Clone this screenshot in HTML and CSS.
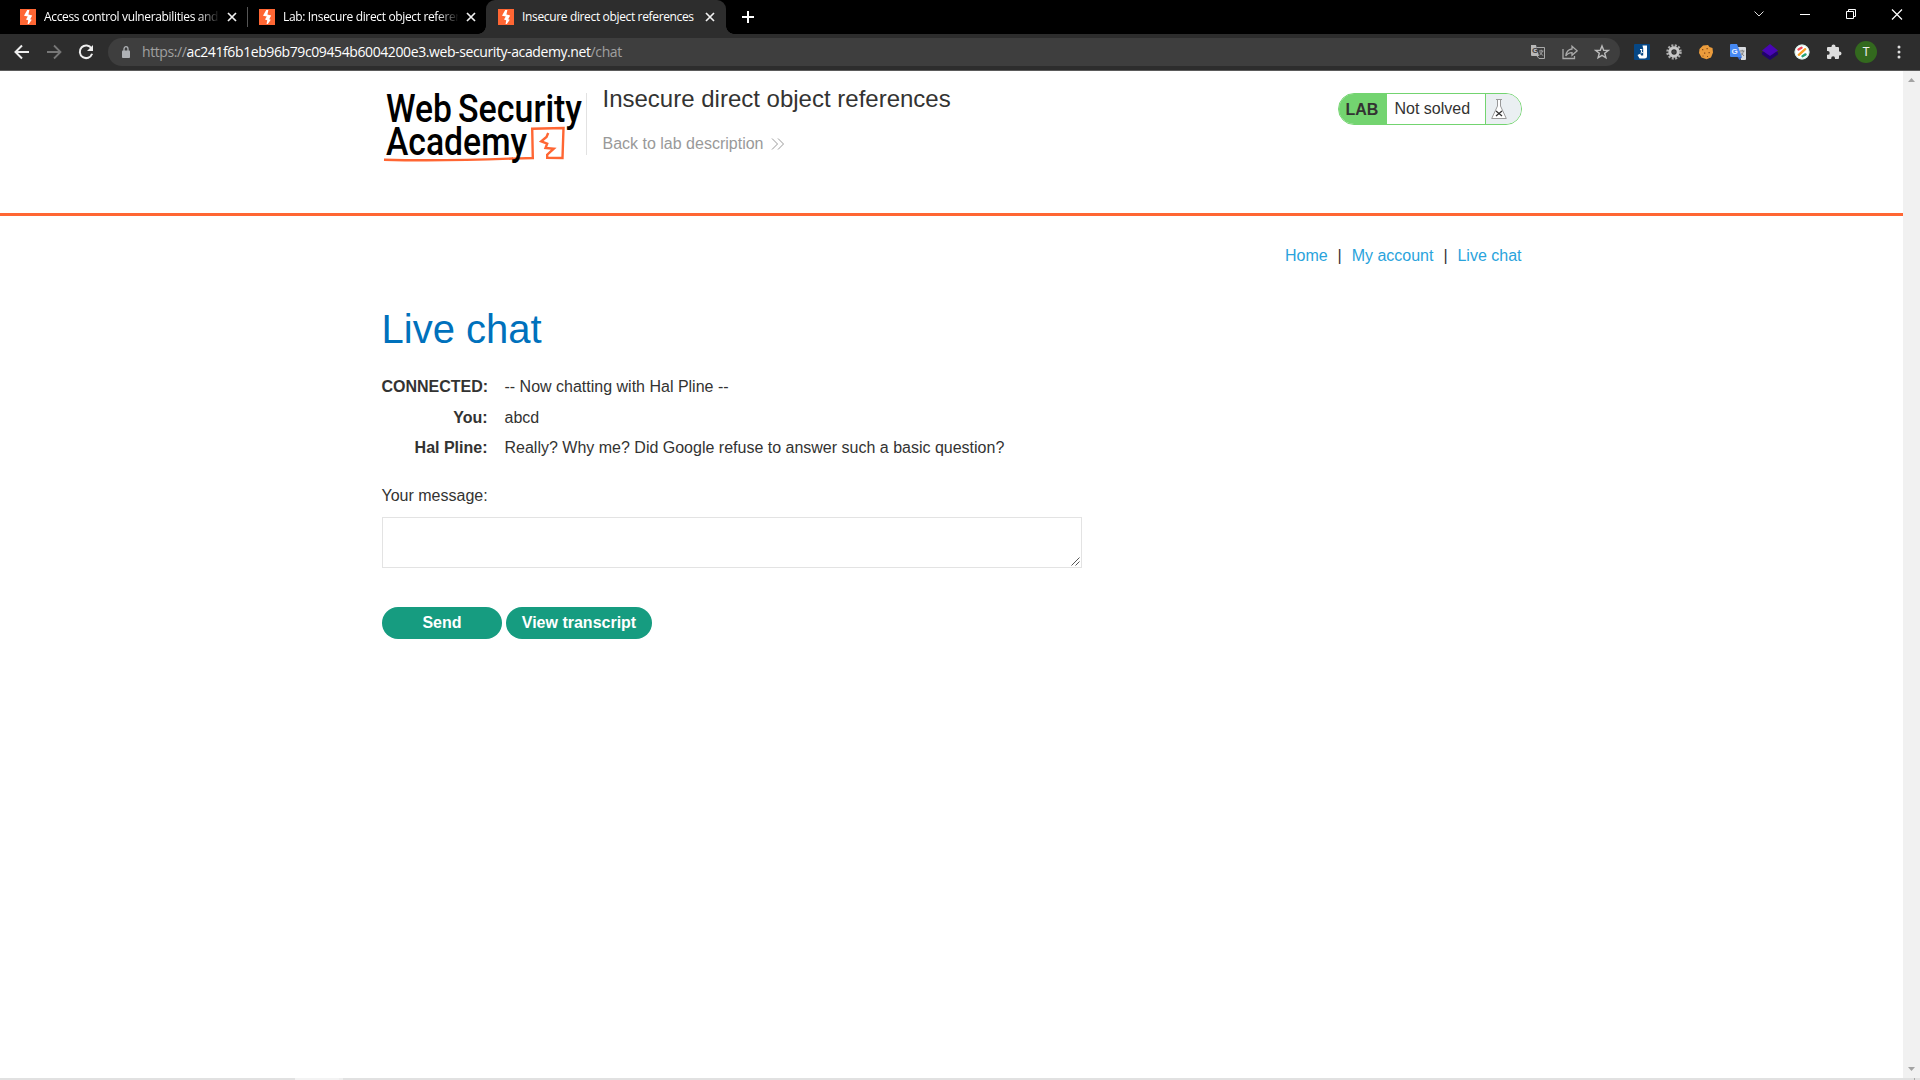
FILE: index.html
```html
<!DOCTYPE html>
<html lang="en">
<head>
<meta charset="utf-8">
<title>Insecure direct object references</title>
<link rel="stylesheet" href="styles.css">
</head>
<body>
<svg class="defs" width="0" height="0">
  <symbol id="bolt" viewBox="0 0 16 16"><rect width="16" height="16" fill="#ff6633"/><path d="M7.200 1h2.200L8.400 5.600l3.800.8-2 3.800 1.600.6L8.800 15H7.600l.6-3.800-2.200-.6L7.800 7.600 4 6.800z" fill="#fff"/></symbol>
  <symbol id="cross" viewBox="0 0 10 10"><path d="M1 1l8 8M9 1L1 9" stroke="#f1f1f1" stroke-width="1.700" fill="none"/></symbol>
</svg>
<div class="browser">
  <header class="tabstrip">
    <div class="tab"><svg class="fav"><use href="#bolt"/></svg><span class="tab-title faded">Access control vulnerabilities and</span><svg class="close"><use href="#cross"/></svg></div>
    <div class="tab divided"><svg class="fav"><use href="#bolt"/></svg><span class="tab-title faded">Lab: Insecure direct object referen</span><svg class="close"><use href="#cross"/></svg></div>
    <div class="tab active"><svg class="fav"><use href="#bolt"/></svg><span class="tab-title">Insecure direct object references</span><svg class="close"><use href="#cross"/></svg></div>
    <svg class="plus" width="12" height="12" viewBox="0 0 12 12"><path d="M6 0v12M0 6h12" stroke="#fff" stroke-width="2"/></svg>
    <div class="window-buttons">
      <svg width="46" height="28" viewBox="0 0 46 28"><path d="M18.500 11.500l4.500 4.500 4.500-4.500" fill="none" stroke="#ddd"/></svg>
      <svg width="46" height="28" viewBox="0 0 46 28"><path d="M18 14.500h10" stroke="#fff"/></svg>
      <svg width="46" height="28" viewBox="0 0 46 28"><path d="M18.500 11.500h7v7h-7zM20.500 11.500v-2h7v7h-2" fill="none" stroke="#fff"/></svg>
      <svg width="46" height="28" viewBox="0 0 46 28"><path d="M18 9.500l10 10M28 9.500l-10 10" stroke="#fff" stroke-width="1.200"/></svg>
    </div>
  </header>
  <div class="toolbar">
    <div class="nav-buttons">
      <svg width="16" height="16" viewBox="0 0 16 16"><path d="M15 8H2M8 1.500L1.500 8 8 14.500" fill="none" stroke="#eee" stroke-width="2"/></svg>
      <svg width="16" height="16" viewBox="0 0 16 16"><path d="M1 8h13M8 1.500L14.500 8 8 14.500" fill="none" stroke="#777" stroke-width="1.800"/></svg>
      <svg width="16" height="16" viewBox="0 0 16 16"><path d="M13.500 4.500A6.300 6.300 0 1 0 14.100 9.800" fill="none" stroke="#eee" stroke-width="2"/><path d="M15 1v6H9z" fill="#eee"/></svg>
    </div>
    <div class="omnibox">
      <svg class="lock" width="8" height="12" viewBox="0 0 8 12"><path d="M.8 4.500h6.400q.8 0 .8 1V11q0 1-.8 1H.8Q0 12 0 11V5.500q0-1 .8-1z" fill="#aeb1b5"/><path d="M2 5V3a2 2.300 0 0 1 4 0v2" fill="none" stroke="#aeb1b5" stroke-width="1.300"/></svg>
      <span class="url">https://<b>ac241f6b1eb96b79c09454b6004200e3.web-security-academy.net</b>/chat</span>
      <div class="omni-icons">
        <svg width="16" height="16" viewBox="0 0 16 16"><path d="M1 1h5l3 11H2q-1 0-1-1z" fill="#b8b8b8"/><path d="M7 3.500h7.500v11H9L7 12" fill="none" stroke="#aaa"/><text x="2" y="9" font-size="8" font-weight="bold" fill="#3d3d3d">G</text><path d="M9 7h4.500M11.200 5.700V7M12.500 7q-.7 3-3 4M9.700 8q1 2 3.500 3.500" fill="none" stroke="#aaa" stroke-width=".9"/></svg>
        <svg width="16" height="16" viewBox="0 0 16 16"><path d="M1 5v9.500h11.500v-2.500" fill="none" stroke="#aaa" stroke-width="1.300"/><path d="M10 2.200L15.200 6.800 10 11.300V8.700Q6 8.700 3.800 12 4.500 5.500 10 5z" fill="none" stroke="#aaa" stroke-width="1.300"/></svg>
        <svg width="16" height="16" viewBox="0 0 16 16"><path d="M8 1.900l1.700 4.300 4.600.2-3.600 2.900 1.200 4.500L8 11.300l-3.900 2.500 1.200-4.500-3.600-2.900 4.600-.2z" fill="none" stroke="#bbb" stroke-width="1.400"/></svg>
      </div>
    </div>
    <div class="extensions">
      <svg width="16" height="16" viewBox="0 0 16 16"><rect width="16" height="16" rx="1" fill="#064785"/><path d="M8.500 1.500H13V12q0 2.500-2.500 2.500H5.500L3.500 11l2.700-1.200 1 1.600h2V4.500z" fill="#fff"/><path d="M6 5.500h2L7 7l1.500 1.500-2 .5" fill="none" stroke="#fff"/></svg>
      <svg width="16" height="16" viewBox="0 0 16 16"><circle cx="8" cy="8" r="6.500" fill="none" stroke="#aaa" stroke-width="2.500" stroke-dasharray="2 1.400"/><circle cx="8" cy="8" r="4.200" fill="none" stroke="#c8c8c8" stroke-width="3"/><circle cx="8" cy="8" r="1.800" fill="#444"/></svg>
      <svg width="16" height="16" viewBox="0 0 16 16"><path d="M5 1.500l5-.5 1.500 2L14.500 4l.5 4.500-2 5-4.500 1.700-5-1.700L1 9l.5-4z" fill="#eb9c3c"/><path d="M4 5h1.300v1.300H4zM8.500 4h1.300v1.300H8.500zM6 8.500h1.300v1.300H6zM10.500 8h1.300v1.300h-1.300zM4.500 11.500h1v1h-1zM9 12h1v1H9z" fill="#8a4a17"/></svg>
      <svg width="16" height="16" viewBox="0 0 16 16"><path d="M7 3h8q1 0 1 1v11q0 1-1 1h-4z" fill="#d7dade"/><path d="M1 0h6l5 13H1q-1 0-1-1V1q0-1 1-1z" fill="#4689f3"/><path d="M7.500 13H12l-2.500 3z" fill="#3265ce"/><text x="1.500" y="9.500" font-size="8" font-weight="bold" fill="#e8f0ff">G</text><path d="M10 7h4.500M12.200 5.800V7M13.500 7q-.5 3-2.500 4.500M11 8.500l3 3.500" fill="none" stroke="#777" stroke-width=".9"/></svg>
      <svg width="16" height="16" viewBox="0 0 16 16"><path d="M0 8v2.500L8 16l8-5.500V8z" fill="#21036b"/><path d="M8 0l8 6.500L8 12 0 6.500z" fill="#4906b5"/></svg>
      <svg width="16" height="16" viewBox="0 0 16 16"><circle cx="8" cy="8" r="7.500" fill="#fff"/><path d="M4.500 5.500l3-1.800" stroke="#f04956" stroke-width="2.400" stroke-linecap="round"/><path d="M4.800 10.800L11.200 5.200" stroke="#f9a321" stroke-width="2.400" stroke-linecap="round"/><path d="M8.500 12.200l3-1.800" stroke="#27a577" stroke-width="2.400" stroke-linecap="round"/><circle cx="8" cy="8" r="7" fill="none" stroke="#b8e6da" stroke-width=".7"/></svg>
      <svg width="16" height="16" viewBox="0 0 16 16"><path d="M1 4q0-1 1-1h3.500V2.500a2 2 0 0 1 4 0V3H12q1 0 1 1v3.500h.5a2 2 0 0 1 0 4H13V14q0 1-1 1H9v-.8a1.900 1.900 0 0 0-3.800 0V15H2q-1 0-1-1v-3.200h.8a1.900 1.900 0 0 0 0-3.800H1z" fill="#ddd"/></svg>
    </div>
    <span class="avatar">T</span>
    <svg class="menu" width="4" height="14" viewBox="0 0 4 14"><circle cx="2" cy="2" r="1.500" fill="#ddd"/><circle cx="2" cy="7" r="1.500" fill="#ddd"/><circle cx="2" cy="12" r="1.500" fill="#ddd"/></svg>
  </div>
  <div class="viewport">
    <main class="page">
      <section class="lab-header">
        <div class="container lab-row">
          <svg class="logo" width="201" height="80" viewBox="0 0 201 80">
            <g fill="none" stroke="#ff6633" stroke-width="2.400">
              <path d="M130 72.600L150.800 72 150.200 42.700 181.500 42 180.500 72 165.200 71.700V68.700L171.800 62.700 163.500 62 165.200 57.700 159.200 55.300 164.500 51 166.200 47"/>
              <path d="M2 73.700q55 1.600 129-1.200"/>
            </g>
            <g class="logo-text">
              <text x="4" y="36" textLength="66" lengthAdjust="spacingAndGlyphs">Web</text>
              <text x="76" y="36" textLength="124" lengthAdjust="spacingAndGlyphs">Security</text>
              <text x="4" y="68.500" textLength="141" lengthAdjust="spacingAndGlyphs">Academy</text>
            </g>
          </svg>
          <div class="title-block">
            <h2>Insecure direct object references</h2>
            <a class="back">Back to lab description <svg width="14" height="12" viewBox="0 0 14 12"><path d="M1 .5L6.500 6 1 11.500M7 .5L12.500 6 7 11.500" fill="none" stroke="#999"/></svg></a>
          </div>
          <div class="lab-status">
            <span class="lab-label">LAB</span><span class="lab-text">Not solved</span>
            <span class="flask"><svg width="16" height="20" viewBox="0 0 16 20"><path d="M5 .5h6M6.500 1v6L.7 19.500h14.600L9.500 7V1" fill="#fff" stroke="#999"/><path d="M5 12l6 5M11 12l-6 5" stroke="#333" stroke-width="1.300"/></svg></span>
          </div>
        </div>
      </section>
      <div class="container">
        <nav class="top-links"><a>Home</a><span>|</span><a>My account</a><span>|</span><a>Live chat</a></nav>
        <h1>Live chat</h1>
        <div class="chat">
          <b>CONNECTED:</b><span>-- Now chatting with Hal Pline --</span>
          <b>You:</b><span>abcd</span>
          <b>Hal Pline:</b><span>Really? Why me? Did Google refuse to answer such a basic question?</span>
        </div>
        <label class="message-label">Your message:</label>
        <div class="message-box"><svg width="9" height="9" viewBox="0 0 9 9"><path d="M.5 8.500l8-8M4.500 8.500l4-4" stroke="#555"/></svg></div>
        <div class="buttons"><span class="button send">Send</span><span class="button view">View transcript</span></div>
      </div>
    </main>
    <aside class="scrollbar">
      <svg width="7" height="4" viewBox="0 0 7 4"><path d="M0 4l3.500-4L7 4z" fill="#a3a3a3"/></svg>
      <svg width="7" height="4" viewBox="0 0 7 4"><path d="M0 0h7L3.500 4z" fill="#a3a3a3"/></svg>
    </aside>
  </div>
  <footer class="taskbar"><i class="task-active"></i><i class="task-mark"></i></footer>
</div>
</body>
</html>
```
FILE: styles.css
```css
* { box-sizing: border-box; }
body { margin: 0; background: #fff; font-family: "Liberation Sans", Arial, sans-serif; font-size: 16px; color: #333332; }
svg { display: block; flex: none; }
.defs { position: absolute; }
.browser { width: 1920px; height: 1080px; display: flex; flex-direction: column; overflow: hidden; }
.tabstrip { height: 34px; background: #000; display: flex; padding-left: 8px; font: 12px "Open Sans", "Noto Sans", sans-serif; color: #fff; flex: none; }
.tab { width: 239px; height: 34px; display: flex; align-items: center; padding-left: 12px; border-radius: 9px 9px 0 0; }
.tab.active { background: #2d2d2d; width: 240px; position: relative; }
.tab.active::before, .tab.active::after { content: ""; position: absolute; bottom: 0; width: 8px; height: 8px; }
.tab.active::before { left: -8px; background: radial-gradient(circle at 0 0, #000 7.5px, #2d2d2d 8px); }
.tab.active::after { right: -8px; background: radial-gradient(circle at 100% 0, #000 7.5px, #2d2d2d 8px); }
.divided { position: relative; }
.divided::before { content: ""; position: absolute; left: 0; top: 7px; width: 1px; height: 20px; background: #555; }
.fav { width: 16px; height: 16px; margin-right: 8px; }
.tab-title { width: 175px; white-space: nowrap; overflow: hidden; letter-spacing: -0.35px; padding-bottom: 1px; }
.faded { mask-image: linear-gradient(90deg, #000 154px, transparent 176px); }
.close { width: 10px; height: 10px; margin-left: 8px; }
.plus { margin: 11px 0 0 16px; }
.window-buttons { display: flex; margin-left: auto; }
.toolbar { height: 37px; background: #2d2d2d; border-bottom: 1px solid #5b5b5b; display: flex; align-items: center; flex: none; }
.nav-buttons { display: flex; gap: 16px; margin-left: 14px; }
.omnibox { width: 1512px; height: 28px; border-radius: 14px; background: #3e3e3e; margin-left: 14px; display: flex; align-items: center; }
.lock { margin-left: 14px; }
.url { margin-left: 12px; font: 14px "Open Sans", "Noto Sans", sans-serif; color: #a0a0a0; letter-spacing: -0.4px; white-space: nowrap; padding-bottom: 1px; }
.url b { color: #fff; font-weight: 400; }
.omni-icons { display: flex; gap: 16px; margin-left: auto; margin-right: 10px; }
.extensions { display: flex; gap: 16px; margin-left: 14px; }
.avatar { width: 22px; height: 22px; border-radius: 50%; background: #33691e; color: #eee; font: 12px/22px Roboto, sans-serif; text-align: center; margin-left: 13px; }
.menu { margin-left: 20px; }
.viewport { flex: 1; display: flex; min-height: 0; }
.page { flex: 1; }
.scrollbar { width: 17px; background: #f1f1f1; display: flex; flex-direction: column; justify-content: space-between; align-items: center; padding: 7px 0; }
.container { width: 1140px; margin: 0 auto; }
.lab-header { height: 145px; border-bottom: 3px solid #ff6633; }
.lab-row { display: flex; align-items: flex-start; padding-top: 15px; }
.logo { overflow: visible; }
.logo-text { font: 500 38px Roboto, sans-serif; fill: #000; }
.title-block { margin-left: 3px; margin-top: 7px; height: 62px; border-left: 1px solid #e2e2e2; padding-left: 16px; }
h2 { margin: -8px 0 0; font-size: 24px; line-height: 28px; font-weight: 400; white-space: nowrap; }
.back { display: flex; gap: 8px; align-items: center; color: #999; line-height: 20px; margin-top: 21px; }
.lab-status { margin-left: auto; margin-top: 7px; width: 184px; height: 32px; border: 1px solid #73d470; border-radius: 16px; display: flex; overflow: hidden; line-height: 29px; }
.lab-label { width: 48px; background: #73d470; font-weight: 700; padding-left: 7px; line-height: 31px; }
.lab-text { width: 98px; padding-left: 8px; }
.flask { flex: 1; border-left: 1px solid #73d470; background: #eaeff2; padding: 5px 0 0 5px; }
.top-links { display: flex; justify-content: flex-end; color: #333332; line-height: 20px; padding-top: 30px; }
.top-links a { color: #29a3dc; }
.top-links span { width: 24px; text-align: center; }
h1 { margin: 40px 0 0; color: #0071bc; font-size: 40px; line-height: 46px; font-weight: 400; }
.chat { display: grid; grid-template-columns: 106px 1fr; column-gap: 17px; line-height: 20px; row-gap: 10.5px; margin-top: 25px; }
.chat b { text-align: right; white-space: nowrap; }
.message-label { display: block; line-height: 20px; margin-top: 28px; }
.message-box { width: 700px; height: 51px; border: 1px solid #e3e3e3; margin-top: 11px; display: flex; justify-content: flex-end; align-items: flex-end; padding: 1px; }
.buttons { display: flex; gap: 4px; margin-top: 39px; }
.button { height: 32px; border-radius: 16px; background: #169c80; color: #fff; font-weight: 700; line-height: 31px; text-align: center; padding-left: 1px; }
.send { width: 120px; }
.view { width: 146px; }
.taskbar { height: 2px; background: #e1e1e1; display: flex; flex: none; }
.task-active { width: 48px; margin-left: 295px; background: #f3f3f3; border-right: 4px solid #eee; }
.task-mark { width: 1px; margin-left: 1571px; background: #aaa; }
```
